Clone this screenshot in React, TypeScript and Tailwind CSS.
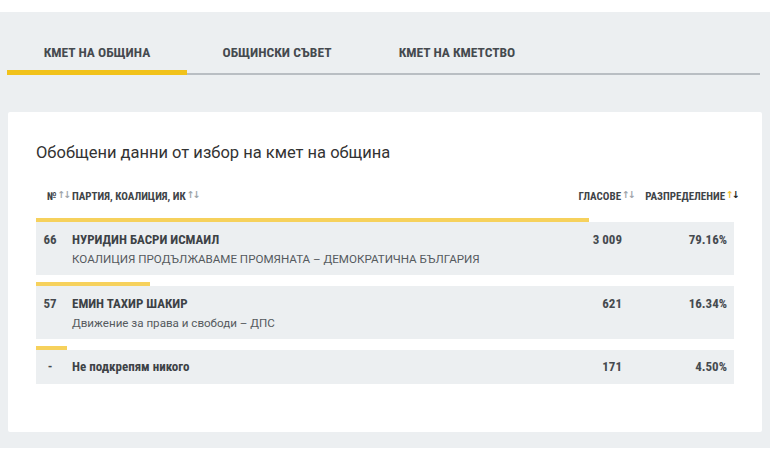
import React from "react";

const cond = "font-['Roboto_Condensed','Roboto',sans-serif]";

function Sort({ active }: { active?: boolean }) {
  return (
    <span className="ml-[1px] inline-flex text-[9.5px] leading-none relative -top-[2px] tracking-[-2px] font-['DejaVu_Sans',sans-serif]">
      <span className={active ? "text-[#f2c230]" : "text-[#a0a5aa]"}>↑</span>
      <span className={active ? "text-[#222]" : "text-[#a0a5aa]"}>↓</span>
    </span>
  );
}

const rows = [
  { n: "66", name: "НУРИДИН БАСРИ ИСМАИЛ", party: "КОАЛИЦИЯ ПРОДЪЛЖАВАМЕ ПРОМЯНАТА – ДЕМОКРАТИЧНА БЪЛГАРИЯ", votes: "3 009", pct: 79.16 },
  { n: "57", name: "ЕМИН ТАХИР ШАКИР", party: "Движение за права и свободи – ДПС", votes: "621", pct: 16.34 },
  { n: "-", name: "Не подкрепям никого", party: "", votes: "171", pct: 4.5 },
];

export default function App() {
  return (
    <div className="w-[770px] h-[462px] bg-white pt-[12px] font-['Roboto',sans-serif]">
      <div className="bg-[#eceff1] h-[436px] px-[7px]">
        <div className="relative flex h-[63px] border-b-2 border-[#b9bec3] mr-[3px]">
          {["КМЕТ НА ОБЩИНА", "ОБЩИНСКИ СЪВЕТ", "КМЕТ НА КМЕТСТВО"].map((t, i) => (
            <div key={t} className={`relative w-[180px] flex items-center justify-center pt-[20px] text-[13.5px] font-bold text-[#454a4f] ${cond}`}>
              {t}
              {i === 0 && <div className="absolute left-0 right-0 -bottom-[2px] h-[5px] bg-[#f1c21b]" />}
            </div>
          ))}
        </div>
        <div className="mt-[37px] ml-[1px] w-[754px] h-[320px] bg-white rounded-[2px] px-[28px] pt-[31px]">
          <div className="text-[16.5px] text-[#333] leading-[20px]">Обобщени данни от избор на кмет на община</div>
          <div className={`mt-[27px] flex items-center h-[14px] text-[11px] font-bold text-[#3f4448] ${cond}`}>
            <div className="w-[36px] pl-[11px] whitespace-nowrap">№<Sort /></div>
            <div className="flex-1">ПАРТИЯ, КОАЛИЦИЯ, ИК<Sort /></div>
            <div className="w-[88px] text-right -mr-[12px] whitespace-nowrap">ГЛАСОВЕ<Sort /></div>
            <div className="w-[116px] text-right -mr-[4px] whitespace-nowrap">РАЗПРЕДЕЛЕНИЕ<Sort active /></div>
          </div>
          <div className="mt-[14px] flex flex-col gap-[7px]">
            {rows.map((r) => (
              <div key={r.n + r.name}>
                <div className="h-[4px] bg-[#f6d15c]" style={{ width: `${r.pct}%` }} />
                <div className={`flex bg-[#eceff1] ${r.party ? "h-[53px] pt-[10px]" : "h-[34px] items-center"}`}>
                  <div className={`w-[28px] mr-[8px] text-center text-[13px] font-bold text-[#454a4f] leading-[16px] ${cond}`}>{r.n}</div>
                  <div className="flex-1">
                    <div className={`text-[13px] font-bold text-[#3d4246] leading-[16px] ${cond}`}>{r.name}</div>
                    {r.party && <div className="text-[11.6px] text-[#555a5e] leading-[16px] mt-[3px]">{r.party}</div>}
                  </div>
                  <div className={`w-[88px] text-right pr-[7px] text-[13px] font-bold text-[#454a4f] leading-[16px] ${cond}`}>{r.votes}</div>
                  <div className={`w-[105px] text-right pr-[7px] text-[13px] font-bold text-[#454a4f] leading-[16px] ${cond}`}>{r.pct.toFixed(2)}%</div>
                </div>
              </div>
            ))}
          </div>
        </div>
      </div>
    </div>
  );
}
